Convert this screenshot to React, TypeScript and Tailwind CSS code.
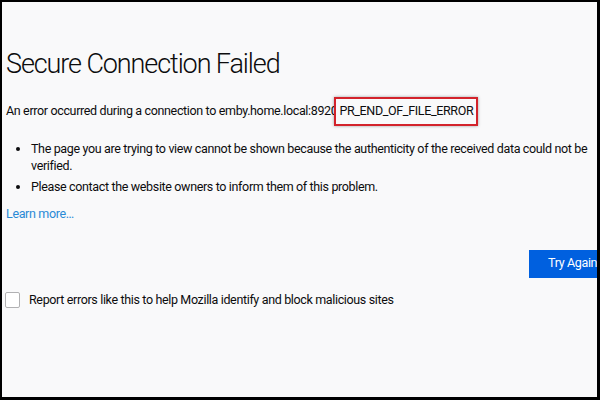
export default function App() {
  return (
    <div className="w-[600px] h-[400px] bg-black pl-[2px] pt-[2px] pr-[3px] pb-[3px]">
      <div
        className="w-full h-full bg-[#f9f9fa] text-[#0c0c0d] overflow-hidden pl-[4px]"
        style={{ fontFamily: 'Roboto, "Noto Sans", sans-serif' }}
      >
        <h1 className="text-[27px] font-light leading-none mt-[49px] tracking-[-1.1px]">
          Secure Connection Failed
        </h1>
        <p className="text-[12.5px] mt-[19px] flex items-center whitespace-nowrap tracking-[-0.35px]">
          <span>An error occurred during a connection to emby.home.local:8920</span>
          <span className="-ml-[3px] border-2 border-[#d3232b] px-[3px] py-[3px] bg-[#f9f9fa] shadow-[0_0_3px_rgba(0,0,0,0.35)]">
            PR_END_OF_FILE_ERROR
          </span>
        </p>
        <ul className="text-[12.5px] mt-[14px] pl-[25px] list-disc leading-[17px] space-y-[4px] tracking-[-0.35px]">
          <li>
            The page you are trying to view cannot be shown because the authenticity of the received data could not be
            verified.
          </li>
          <li>Please contact the website owners to inform them of this problem.</li>
        </ul>
        <a className="block text-[12.5px] text-[#2a8ad6] mt-[10px] tracking-[-0.35px]">Learn more…</a>
        <div className="flex justify-end mt-[26px]">
          <button className="bg-[#0060df] text-white text-[12.5px] h-[28px] w-[68px] pl-[19px] text-left whitespace-nowrap tracking-[-0.35px]">
            Try Again
          </button>
        </div>
        <label className="flex items-center gap-[9px] mt-[13px] text-[12.5px] tracking-[-0.35px]">
          <span className="w-[15px] h-[16px] border border-[#b1b1b3] rounded-[2px] bg-white -ml-[1px]" />
          Report errors like this to help Mozilla identify and block malicious sites
        </label>
      </div>
    </div>
  );
}
